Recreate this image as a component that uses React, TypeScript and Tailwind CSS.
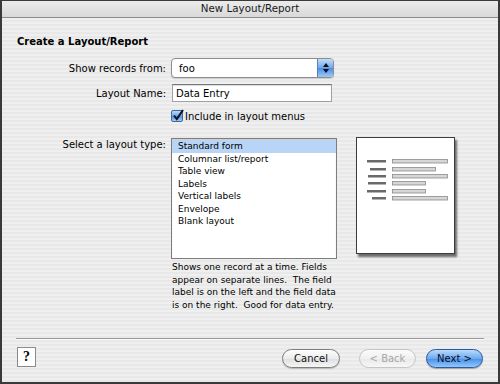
import React from "react";

const font = { fontFamily: '"DejaVu Sans", "Liberation Sans", sans-serif' };

const items = [
  "Standard form",
  "Columnar list/report",
  "Table view",
  "Labels",
  "Vertical labels",
  "Envelope",
  "Blank layout",
];

const leftBars = [
  { x: 10, y: 22 },
  { x: 13, y: 30 },
  { x: 11, y: 37 },
  { x: 11, y: 44 },
  { x: 10, y: 52 },
  { x: 15, y: 59 },
];
const rightWidths = [55, 43, 55, 33, 33, 55];

function Preview() {
  return (
    <div className="w-[99px] h-[117px] bg-white border border-[#3c3c3c] shadow-[2px_3px_2px_rgba(0,0,0,0.55)]">
      <svg width="97" height="115" viewBox="0 0 97 115">
        {leftBars.map((b, i) => (
          <rect key={"l" + i} x={b.x} y={b.y} width={29 - b.x} height={2.5} fill="#6a6a6a" />
        ))}
        {rightWidths.map((w, i) => (
          <rect
            key={"r" + i}
            x={35.5}
            y={leftBars[i].y - 0.5}
            width={w}
            height={3.5}
            fill="#d6d6d6"
            stroke="#8a8a8a"
            strokeWidth={0.8}
          />
        ))}
      </svg>
    </div>
  );
}

export default function App() {
  return (
    <div
      style={font}
      className="w-[500px] h-[384px] flex flex-col border-t border-x-2 border-b-2 border-[#3a3a3a] text-black overflow-hidden"
    >
      {/* Title bar */}
      <div className="h-[17px] flex items-center justify-center bg-[linear-gradient(#ebebeb,#d9d9d9)] border-b border-[#8c8c8c] text-[10.3px] text-[#1a1a1a]">
        New Layout/Report
      </div>

      {/* Body */}
      <div className="flex-1 flex flex-col bg-[repeating-linear-gradient(180deg,#efefef_0px,#efefef_2px,#e8e8e8_2px,#e8e8e8_4px)]">
        <div className="mt-[18px] pl-[15px] h-[12px] leading-[12px] text-[10px] font-bold">
          Create a Layout/Report
        </div>

        {/* Show records from */}
        <div className="mt-[10px] flex items-center h-[20px]">
          <div className="w-[164px] text-right text-[10px] pr-0">Show records from:</div>
          <div className="ml-[5px] w-[163px] h-[20px] rounded-[4px] border border-[#8e8e8e] bg-white flex items-center shadow-[0_1px_1px_rgba(0,0,0,0.15)]">
            <span className="pl-[7px] flex-1 text-[10px]">foo</span>
            <div className="w-[16px] h-[18px] mr-[0px] rounded-r-[3px] bg-[linear-gradient(#c4ddfa,#6ea6ec_50%,#4b8fe6_52%,#9ccaf7)] border-l border-[#5a7fb5] flex flex-col items-center justify-center gap-[2px]">
              <svg width="6" height="4" viewBox="0 0 6 4"><path d="M3 0 L6 4 L0 4 Z" fill="#111" /></svg>
              <svg width="6" height="4" viewBox="0 0 6 4"><path d="M0 0 L6 0 L3 4 Z" fill="#111" /></svg>
            </div>
          </div>
        </div>

        {/* Layout Name */}
        <div className="mt-[6px] flex items-center h-[18px]">
          <div className="w-[164px] text-right text-[10px]">Layout Name:</div>
          <div className="ml-[6px] w-[160px] h-[18px] bg-white border border-[#a0a0a0] border-t-[#777] flex items-center pl-[3px] text-[10px] shadow-[inset_0_1px_1px_rgba(0,0,0,0.15)]">
            Data Entry
          </div>
        </div>

        {/* Checkbox */}
        <div className="mt-[7px] flex items-center h-[14px]">
          <div className="w-[164px]" />
          <div className="ml-[5px] w-[12px] h-[12px] rounded-[2px] border border-[#3f68a6] bg-[linear-gradient(#bcd8fb,#6ea8ee_50%,#4d90e6_52%,#a0ccf8)] relative">
            <svg width="12" height="12" viewBox="0 0 12 12" className="absolute -top-[2px] left-[0px]">
              <path d="M2 6.5 L4.8 10 L11 1" stroke="#111" strokeWidth="2" fill="none" />
            </svg>
          </div>
          <span className="ml-[2px] text-[10px]">Include in layout menus</span>
        </div>

        {/* Layout type */}
        <div className="mt-[15px] flex items-start">
          <div className="w-[164px] text-right text-[10px] mt-[1px] leading-[12px]">Select a layout type:</div>
          <div className="ml-[5px] w-[166px] h-[121px] bg-white border border-[#7d7d7d] shadow-[inset_0_1px_1px_rgba(0,0,0,0.2)] flex flex-col pt-[1px]">
            {items.map((it, i) => (
              <div
                key={it}
                className={
                  "h-[12.5px] leading-[12.5px] pl-[6px] text-[9px] " +
                  (i === 0 ? "bg-[#b8d4f6]" : "")
                }
              >
                {it}
              </div>
            ))}
          </div>
          <div className="ml-[19px] -mt-[1px]">
            <Preview />
          </div>
        </div>

        {/* Description */}
        <div className="ml-[170px] mt-[2px] text-[9px] leading-[12.5px] whitespace-pre">
          {"Shows one record at a time. Fields\nappear on separate lines.  The field\nlabel is on the left and the field data\nis on the right.  Good for data entry."}
        </div>

        {/* Footer */}
        <div className="mt-auto pb-[14px]">
          <div className="mx-[14px] h-[2px] border-t border-[#9a9a9a] border-b border-b-[#fafafa]" />
          <div className="mt-[6px] flex items-center h-[22px] pl-[15px] pr-[15px]">
            <div className="w-[19px] h-[20px] bg-white border border-[#8a8a8a] flex items-center justify-center text-[14px] font-bold leading-none" style={{ fontFamily: '"Liberation Serif", serif' }}>
              ?
            </div>
            <div className="flex-1" />
            <button className="mt-[3px] w-[58px] h-[19px] rounded-full border border-[#7e7e7e] bg-[linear-gradient(#fefefe,#ececec_50%,#dedede_52%,#f6f6f6)] text-[10px] text-[#111] flex items-center justify-center shadow-[0_1px_1px_rgba(0,0,0,0.2)]">
              Cancel
            </button>
            <button className="mt-[3px] ml-[19px] w-[57px] h-[19px] rounded-full border border-[#c6c6c6] bg-[linear-gradient(#fbfbfb,#f0f0f0_50%,#e9e9e9_52%,#f7f7f7)] text-[10px] text-[#a6a6a6] flex items-center justify-center">
              &lt; Back
            </button>
            <button className="mt-[3px] ml-[10px] w-[57px] h-[19px] rounded-full border border-[#2b5aa3] bg-[linear-gradient(#b9dafb,#6caaf0_50%,#4691ea_52%,#94c8f8)] text-[10px] text-[#0b0b2a] flex items-center justify-center shadow-[0_1px_1px_rgba(0,0,0,0.3)]">
              Next &gt;
            </button>
          </div>
        </div>
      </div>
    </div>
  );
}
